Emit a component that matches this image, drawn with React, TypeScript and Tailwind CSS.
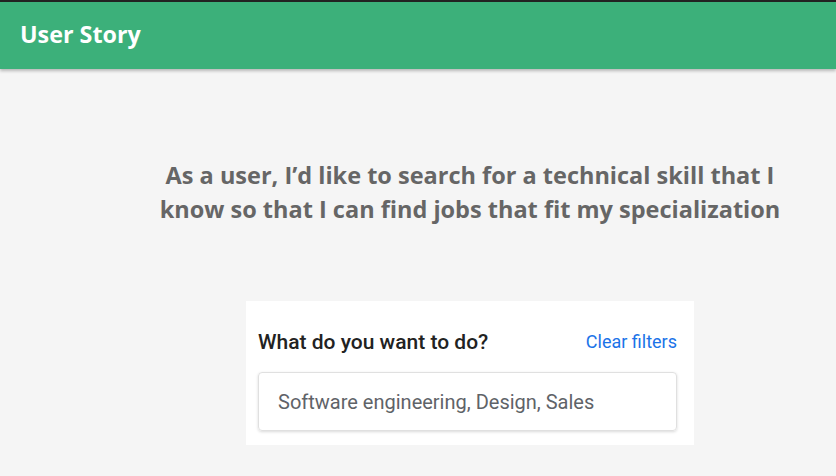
import React from 'react';

const Header: React.FC<{ title: string }> = ({ title }) => (
  <header className="border-t-2 border-[#222] bg-[#3cb07a] h-[69px] flex items-center px-5 shadow-[0_2px_3px_rgba(0,0,0,0.25)] relative z-10">
    <h1 className="text-white text-[23.3px] leading-[32px] font-bold font-['Open_Sans',sans-serif] -mt-[3px]">{title}</h1>
  </header>
);

const FilterCard: React.FC = () => (
  <div className="w-[448px] bg-white pt-[27px] pb-[14px] pl-3 pr-[17px] font-['Roboto',sans-serif]">
    <div className="flex items-center justify-between leading-[28px]">
      <span className="text-[21px] font-medium text-[#222]">What do you want to do?</span>
      <span className="text-[18px] text-[#1a73e8]">Clear filters</span>
    </div>
    <div className="mt-[16px] h-[59px] w-[419px] rounded border border-[#e0e0e0] shadow-[0_1px_3px_rgba(0,0,0,0.15)] flex items-center px-[19px]">
      <span className="text-[20px] text-[#5f6368]">Software engineering, Design, Sales</span>
    </div>
  </div>
);

export default function App() {
  return (
    <div className="w-[836px] h-[476px] bg-[#f5f5f5] overflow-hidden">
      <Header title="User Story" />
      <div className="flex flex-col items-center pl-[104px]">
        <p className="mt-[89px] w-[660px] text-center text-[23.5px] leading-[34px] font-bold text-[#666] font-['Open_Sans',sans-serif]">
          As a user, I’d like to search for a technical skill that I know so that I can find jobs that fit my specialization
        </p>
        <div className="mt-[75px]">
          <FilterCard />
        </div>
      </div>
    </div>
  );
}
